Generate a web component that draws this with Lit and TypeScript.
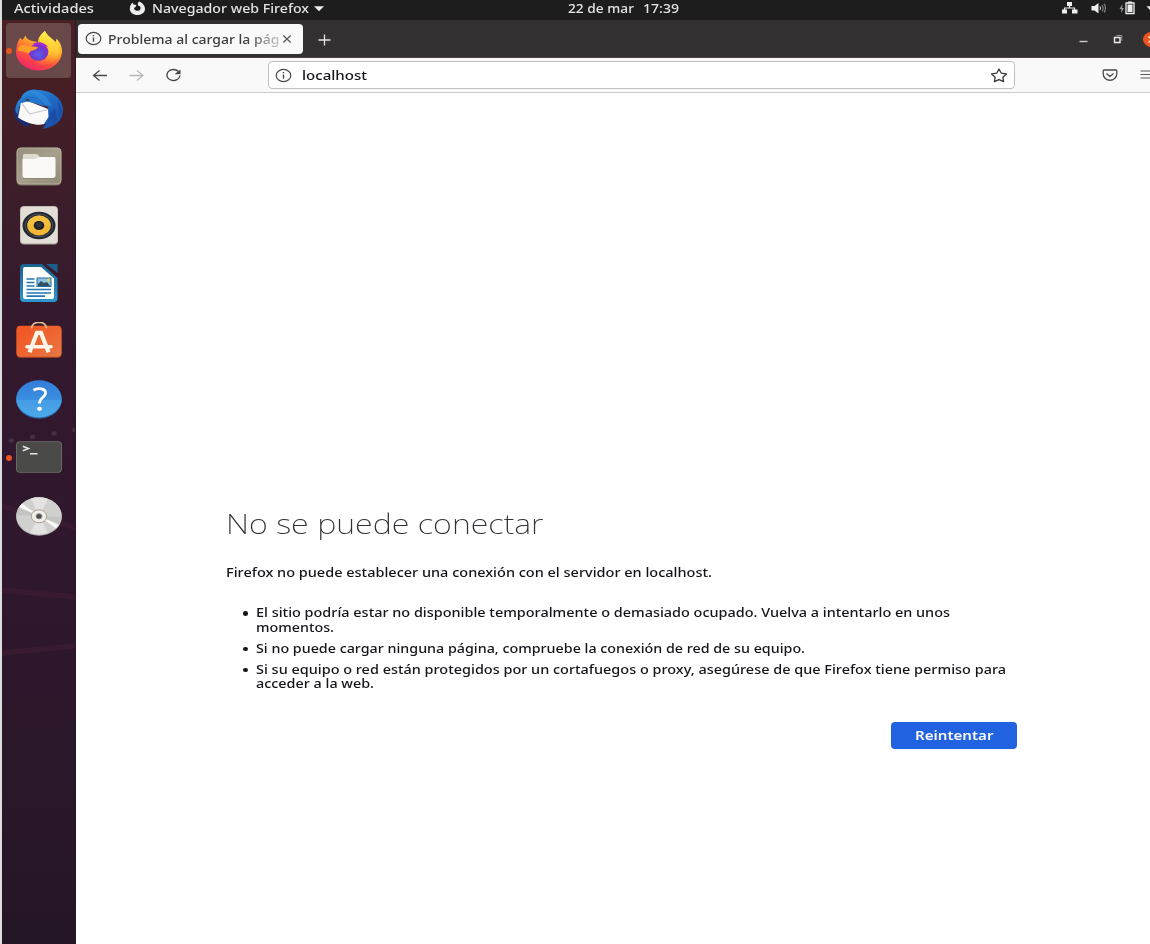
import { LitElement, html, svg, css } from "lit";
import { customElement, property } from "lit/decorators.js";

/** A single line of text stretched horizontally to a given width. */
@customElement("wide-text")
class WideText extends LitElement {
  @property({ type: Number }) w = 100;
  @property() text = "";
  static styles = css`
    :host { display: block; white-space: pre; flex: none; text-align: left; }
    .run { display: inline-block; transform-origin: 0 50%; vertical-align: top; }
  `;
  updated() {
    const run = this.renderRoot.querySelector(".run") as HTMLElement;
    this.style.width = `${this.w}px`;
    run.style.transform = "none";
    const natural = run.getBoundingClientRect().width;
    if (natural) run.style.transform = `scaleX(${this.w / natural})`;
  }
  render() {
    return html`<span class="run">${this.text}</span>`;
  }
}

const firefox = svg`
  <defs>
    <linearGradient id="fa" x1=".8" y1="0" x2=".25" y2="1"><stop offset="0" stop-color="#fff04a"/><stop offset=".35" stop-color="#ffb52a"/><stop offset=".62" stop-color="#ff5a36"/><stop offset="1" stop-color="#f0206c"/></linearGradient>
    <linearGradient id="fc" x1=".6" y1="0" x2=".5" y2="1"><stop offset="0" stop-color="#fff14b"/><stop offset=".6" stop-color="#ffc530"/><stop offset="1" stop-color="#ff8a2c" stop-opacity=".2"/></linearGradient>
    <radialGradient id="fb" cx=".5" cy=".65" r=".6"><stop offset="0" stop-color="#5b5fe8"/><stop offset=".6" stop-color="#6a3bd0"/><stop offset="1" stop-color="#9a25c8"/></radialGradient>
  </defs>
  <path fill="url(#fa)" d="M29 0C24 4 22 7 22 11L16 10C12 9 10 7 9.500 4.500L6.500 9 4 7C1 12 0 16 0 21C0 31 10 39.500 23 39.500C36 39.500 46 31 46 20C46 15 43 9 40 8L40 11 36 8C34 6 30 3 29 0Z"/>
  <path fill="url(#fc)" d="M29 0C24 4 23 7 24 11C31 13 35 19 31 25C29 29 24 31 19 30C26 36 38 34 42 26C44 21 43 16 39 11L36 8C34 6 30 3 29 0Z"/>
  <ellipse cx="22.500" cy="21" rx="9.800" ry="8.800" fill="url(#fb)"/>
  <path fill="#a22bcf" d="M17 13C20 10 29 11 32 16L26 14.500Z"/>
  <path fill="#ff9d29" d="M2 17C5 13 9 14 12 15L22 16C21 19 17 19 15 20L13 22C10 22 7 20 2 20Z"/>`;

const thunderbird = svg`
  <defs><linearGradient id="ta" x1=".1" y1="0" x2=".8" y2="1"><stop offset="0" stop-color="#2b90dc"/><stop offset=".5" stop-color="#1f69c4"/><stop offset="1" stop-color="#1b4ea8"/></linearGradient></defs>
  <path fill="#1d2a6b" d="M1 16C-2 24 1 31 7 35C10 37 14 38 17 37L9 28Z"/>
  <path fill="url(#ta)" d="M2 17C3 13 5 11 7 9C9 3 16-1 24 1C38 1 49 10 49 21C49 31 42 38 28 40L33 34 28 36 34 28L34 18 23 13 11 13 5 18 4 25C1 24 1 20 2 17Z"/>
  <path fill="#3d9be8" opacity=".4" d="M16 2C26 1 35 8 38 17L31 16C26 9 20 5 16 2Z"/>
  <path fill="#174596" opacity=".6" d="M41 19L43 30 38 35 39 29 34 34 36 24ZM44 10L48 22 45 27Z"/>
  <path fill="#fafafa" d="M7 13.500L14 12 34 20 34.500 28 30 35C24 37 14 35 4 28.500Z"/>
  <path fill="none" stroke="#c4c5c8" stroke-width="1.100" d="M8 14.500L15.500 25 34 20.500"/>
  <path fill="#2374cb" d="M5 13C10 7 15 6 20 8L32 18 20 14 13 12.500 8 14Z"/><ellipse cx="13.500" cy="11" rx="2" ry="1.300" fill="#374459"/>`;

const files = svg`
  <defs><linearGradient id="ga" x1="0" y1="0" x2="1" y2="1"><stop offset="0" stop-color="#96907e"/><stop offset=".5" stop-color="#a69f8c"/><stop offset="1" stop-color="#918a76"/></linearGradient></defs>
  <rect x=".5" y=".5" width="45" height="38" rx="4.500" fill="#756e5e"/><rect x="1" y="1" width="44" height="36" rx="4" fill="url(#ga)" stroke="#bdb7a5" stroke-width=".8"/>
  <path fill="#dedacf" d="M7 8Q7 7 9 7L20 7Q22 7 23 9L24 11 24 15 7 15Z"/>
  <path fill="#faf9f7" d="M7 12L18 12Q20 12 21 11Q22 10 24 10L38 10Q39.500 10 39.500 12L39.500 28Q39.500 31 37 31L9 31Q6.500 31 6.500 28L6.500 12Z"/>
  <path d="M7 31.500H39" stroke="#827b69" opacity=".5"/>`;

const music = svg`
  <rect x="4" y="0" width="38" height="38.500" rx="4" fill="#aaa49a"/><rect x="4.500" y=".5" width="37" height="37" rx="4" fill="#e2ded5"/>
  <ellipse cx="23" cy="19.500" rx="16.500" ry="13.800" fill="#22272f"/><ellipse cx="23" cy="19.500" rx="13.800" ry="11.400" fill="none" stroke="#596170" stroke-width=".8"/>
  <ellipse cx="23" cy="19.500" rx="11.800" ry="9.900" fill="#f3b735"/><path d="M11.500 19.500A11.500 9.900 0 0 1 34.500 19.500Z" fill="#f7c64b" opacity=".6"/>
  <ellipse cx="23" cy="19.500" rx="5.300" ry="4.500" fill="#1d2025"/><ellipse cx="23" cy="19" rx="3.200" ry="2.500" fill="#30343a"/>`;

const writer = svg`
  <defs><linearGradient id="wa" x1="0" y1="0" x2="0" y2="1"><stop offset="0" stop-color="#1a628e"/><stop offset="1" stop-color="#2d97cd"/></linearGradient></defs>
  <path fill="url(#wa)" d="M8 0H26L41.500 14V34Q41.500 38 38 38H8Q4 38 4 34V4Q4 0 8 0Z"/>
  <path fill="#1a5e8b" d="M30 0H41.500V9Z"/>
  <path fill="#fff" d="M9 3H25L38 14.500V33Q38 35 36 35H9Q7 35 7 33V5Q7 3 9 3Z"/>
  <path stroke="#1f77b4" stroke-width="1.700" d="M10.500 15H18.500M10.500 18.500H18.500M10.500 22H18.500M10.500 25.500H35M10.500 29H35M10.500 32.200H29"/>
  <rect x="21" y="14" width="14" height="8.500" fill="#8cc4e8" stroke="#246f9f"/><path fill="#354f60" d="M22 22V20L25 17 28 19 31 18 34 22Z"/><circle cx="32.500" cy="16" r="1.500" fill="#f6d04c"/>`;

const store = svg`
  <defs><linearGradient id="sa" x1="0" y1="0" x2="1" y2="1"><stop offset="0" stop-color="#f15422"/><stop offset=".5" stop-color="#ee6430"/><stop offset="1" stop-color="#e77744"/></linearGradient></defs>
  <g transform="translate(0 -1.700)"><rect x=".5" y="6" width="45" height="31.500" rx="4" fill="#b94720"/><rect x=".5" y="5.500" width="45" height="31" rx="4" fill="url(#sa)"/>
  <path fill="none" stroke="#e2bd91" stroke-width="1.800" d="M15.500 8C16 0 30 0 30.500 8"/>
  <path fill="none" stroke="#fff4ea" stroke-width="4.200" d="M13.500 32L21 12.500H25L32.500 32"/><path stroke="#fff4ea" stroke-width="3.600" stroke-linecap="round" d="M11 26.500H35"/></g>`;

const help = svg`
  <defs><linearGradient id="ha" x1="0" y1="0" x2="0" y2="1"><stop offset="0" stop-color="#347dda"/><stop offset=".52" stop-color="#3b8fe0"/><stop offset=".54" stop-color="#459de5"/><stop offset="1" stop-color="#4ba9e8"/></linearGradient></defs>
  <ellipse cx="23" cy="19.500" rx="23" ry="19.200" fill="#2766a7"/><ellipse cx="23" cy="19" rx="22.700" ry="18.500" fill="url(#ha)"/>
  <path fill="none" stroke="#fff" stroke-width="2.800" d="M17.500 10.200C22 7.500 30 8.500 29.500 13.500C29 17.500 23.500 17.500 23.500 23.500"/><ellipse cx="23.500" cy="28.800" rx="2.500" ry="2.100" fill="#fff"/>`;

const terminal = svg`
  <g transform="translate(0 -.8)"><rect x="0" y="4" width="46" height="31.500" rx="4" fill="#70706e"/><rect x=".8" y="4.800" width="44.400" height="29.900" rx="3.500" fill="#4a4a49"/>
  <path fill="none" stroke="#e7e7e7" stroke-width="1.500" d="M6.800 9L12.500 11.300 6.800 13.600M14 16.600H21.500"/></g>`;

const disc = svg`
  <ellipse cx="23" cy="19.500" rx="23" ry="19.200" fill="#aaa9a8"/><ellipse cx="23" cy="19" rx="22.600" ry="18.700" fill="#d0d0cf"/>
  <path fill="#e3e3e2" d="M23 19L15 1.500A22.600 18.700 0 0 1 32 2ZM23 19L14 36A22.600 18.700 0 0 0 32 36Z"/><path fill="#c3c3c2" d="M23 19L.5 18Q1 14 3 11ZM23 19L45.500 20Q45 24 43 27Z"/>
  <path fill="#f9f9f8" d="M23 19L3 10 6 6.500ZM23 19L40 31.500 43 28Z"/>
  <ellipse cx="23" cy="19.300" rx="7.700" ry="6.500" fill="#f0efeb" stroke="#aaa28d"/><ellipse cx="23" cy="19.300" rx="3" ry="2.600" fill="#4d4d4d" stroke="#908d86"/>`;

const apps = [
  { name: "firefox", art: firefox, h: 40, w: 46, active: true, running: true },
  { name: "thunderbird", art: thunderbird, h: 40, w: 49 },
  { name: "files", art: files, h: 39, w: 46 },
  { name: "music", art: music, h: 39, w: 46 },
  { name: "writer", art: writer, h: 39, w: 46 },
  { name: "store", art: store, h: 39, w: 46 },
  { name: "help", art: help, h: 39, w: 46 },
  { name: "terminal", art: terminal, h: 39, w: 46, running: true },
  { name: "disc", art: disc, h: 39, w: 46 },
];

@customElement("app-dock")
class AppDock extends LitElement {
  static styles = css`
    :host { display: block; position: relative; width: 73.550px; flex: none; box-sizing: border-box; border-right: 1px solid #2a1727; overflow: hidden;
      background: linear-gradient(#4b2023 0, #431e25 90px, #3c1d2a 180px, #351a2d 290px, #30172d 440px, #2e172d 620px, #291728 800px, #251625 924px); }
    .scene { position: absolute; left: 0; top: 0; }
    .list { position: relative; display: flex; flex-direction: column; padding-top: 1.500px; }
    .slot { display: flex; height: 58.200px; align-items: center; padding-left: 4px; }
    .tile { position: relative; width: 65px; height: 54.500px; border-radius: 4px; display: flex; align-items: center; justify-content: center; }
    .active { background: #694849; }
    .dot { position: absolute; left: 0; top: 24.300px; width: 6px; height: 6px; border-radius: 50%; background: #e95420; }
    svg { display: block; flex: none; }
  `;
  render() {
    return html`
      <svg class="scene" width="74" height="924">
        <g fill="#45303f"><ellipse cx="9.500" cy="420.500" rx="2.700" ry="2.200"/><ellipse cx="30.500" cy="417" rx="2.700" ry="2.200"/><ellipse cx="52" cy="413.500" rx="2.700" ry="2.200"/><ellipse cx="73" cy="410" rx="2.700" ry="2.200"/></g>
        <g stroke="#381b30" stroke-width="5.500"><path d="M0 486L74 508"/><path d="M0 570L74 577"/><path d="M0 633L74 626"/></g>
      </svg>
      <div class="list">
        ${apps.map((a) => html`<div class="slot"><div class="tile ${a.active ? "active" : ""}">
          ${a.running ? html`<span class="dot"></span>` : ""}
          <svg width=${a.w} height=${a.h} viewBox="0 0 ${a.w} ${a.h}">${a.art}</svg>
        </div></div>`)}
      </div>`;
  }
}

@customElement("system-bar")
class SystemBar extends LitElement {
  static styles = css`
    :host { display: flex; height: 20px; background: #1d1d1d; color: #e4e4e4; font: 500 12.200px/17px "Noto Sans", sans-serif; margin-left: 2px; overflow: hidden; }
    .left { display: flex; width: 566px; padding-left: 12px; box-sizing: border-box; }
    .logo { margin: 1px 6px 0 35px; }
    .caret { margin: 6px 0 0 5px; }
    .clock { display: flex; gap: 9px; flex: 1; }
    .tray { display: flex; width: 88px; }
    svg { display: block; flex: none; }
  `;
  render() {
    return html`
      <div class="left">
        <wide-text .w=${80} text="Actividades"></wide-text>
        <svg class="logo" width="17" height="15" viewBox="0 0 17 15"><path fill="#eee" d="M10 .5C13 1.500 16 4 16 8C16 11.500 12.500 14 8.500 14C4 14 .8 11.500 .8 7.500C.8 5 2 3 3.500 1.500L4.500 3.500 7.500 4 6.500 6 5 7C5 9 7 10 9 9.800C12 9.500 12.300 6.500 10.500 5L9 4.500C8.700 3 9 1.500 10 .5Z"/></svg>
        <wide-text .w=${157} text="Navegador web Firefox"></wide-text>
        <svg class="caret" width="10" height="6"><path fill="#eee" d="M0 .3H10L5 5.200Z"/></svg>
      </div>
      <div class="clock"><wide-text .w=${66} text="22 de mar"></wide-text><wide-text .w=${36} text="17:39"></wide-text></div>
      <div class="tray">
        <svg width="88" height="20" viewBox="0 0 88 20">
          <path fill="#eee" d="M5 2H10V6H5ZM0 9.500H5V13.500H0ZM10 9.500H15.500V13.500H10Z"/><path fill="none" stroke="#eee" stroke-width="1.200" d="M7.500 6V8H2.500V10M7.500 8H12.500V10"/>
          <path fill="#eee" d="M29.500 6H32.500L36.500 3V13.500L32.500 10.500H29.500Z"/><path fill="none" stroke="#ddd" stroke-width="1.100" d="M38 6.500Q39.200 8.300 38 10"/><path fill="none" stroke="#888" stroke-width="1.100" d="M40 5Q42.300 8.300 40 11.500M42 3.800Q45 8.300 42 12.500"/>
          <path fill="#999" d="M60.500 4L57.500 9H59.500L59 13 62 8H60Z"/><path fill="none" stroke="#eee" stroke-width="1.300" d="M64 3H72V13.500H64Z"/><path fill="#eee" d="M66 1.500H70V3H66ZM65.500 4.500H70.500V12H65.500Z"/>
          <path fill="#eee" d="M84.500 6.300H94L89 11Z"/>
        </svg>
      </div>`;
  }
}

const info = html`<svg width="17" height="15" viewBox="0 0 17 15"><ellipse cx="8.500" cy="7.500" rx="7.300" ry="6.100" fill="none" stroke="#484848" stroke-width="1.200"/><path stroke="#484848" stroke-width="1.400" d="M8.500 6.500V10.800M8.500 4V5.300"/></svg>`;

@customElement("browser-chrome")
class BrowserChrome extends LitElement {
  static styles = css`
    :host { display: block; font: 500 12.600px/18px "Noto Sans", sans-serif; color: #15141a; }
    svg { display: block; flex: none; }
    .tabs { display: flex; box-sizing: border-box; height: 38px; background: #333031; border-bottom: 1px solid #4c4546; padding: 3.500px 0 0 2px; overflow: hidden; }
    .tab { display: flex; align-items: center; box-sizing: border-box; width: 225px; height: 30.500px; background: #f9f9f9; border-radius: 4px; padding-left: 7px; color: #3d3d40; flex: none; }
    .label { width: 171px; margin-left: 6px; padding-top: 2px; overflow: hidden; -webkit-mask-image: linear-gradient(90deg, #000 138px, transparent 182px); mask-image: linear-gradient(90deg, #000 138px, transparent 182px); }
    .close { margin-left: 3px; }
    .plus { margin: 10px 0 0 15.500px; }
    .controls { margin-left: auto; margin-top: 5px; }
    .tools { display: flex; box-sizing: border-box; height: 35px; background: #f9f9fa; border-bottom: 1px solid #cccccf; padding-top: 3px; overflow: hidden; }
    .nav { width: 192px; }
    .url { display: flex; align-items: center; box-sizing: border-box; width: 747px; height: 28px; border: 1px solid #bfbfc4; border-radius: 4px; background: #fff; padding: 0 6px 0 6.500px; flex: none; }
    .host { margin-left: 10px; padding-top: 1.500px; flex: 1; }
  `;
  render() {
    return html`
      <div class="tabs">
        <div class="tab">${info}<div class="label"><wide-text .w=${192} text="Problema al cargar la página"></wide-text></div>
          <svg class="close" width="10" height="10"><path stroke="#555" stroke-width="1.200" d="M1.300 1.500L8.700 8.500M8.700 1.500L1.300 8.500"/></svg>
        </div>
        <svg class="plus" width="13" height="12"><path stroke="#e6e6e6" stroke-width="1.300" d="M6.500 .5V11.500M.5 6H12.500"/></svg>
        <svg class="controls" width="75" height="22" viewBox="0 0 75 22">
          <path stroke="#ccc" stroke-width="1.400" d="M4.500 12.500H12.500"/><path fill="none" stroke="#eee" stroke-width="1.400" d="M39.500 8.500H45V13.500H39.500Z"/><path fill="none" stroke="#999" d="M41.500 6.500H46.800V11.800"/>
          <ellipse cx="76.500" cy="10.500" rx="8.500" ry="7.500" fill="#e95420"/><path stroke="#fff" stroke-width="1.200" d="M73.500 7.500L79 13M79 8L73.500 13.500"/>
        </svg>
      </div>
      <div class="tools">
        <svg class="nav" width="192" height="30" viewBox="0 0 192 30">
          <path fill="none" stroke="#4a4a4d" stroke-width="1.300" d="M31 14.500H17.500M23.500 9.500L17.500 14.500 23.500 19.500"/>
          <path fill="none" stroke="#b9b9bc" stroke-width="1.300" d="M53.500 14.500H67M61 9.500L67 14.500 61 19.500"/>
          <path fill="none" stroke="#444447" stroke-width="1.300" d="M102.500 10.500A6.600 5.500 0 1 0 104 14.500"/><path fill="#444447" d="M104.500 8.500V13.300H98.500Z"/>
        </svg>
        <div class="url">${info}<wide-text class="host" .w=${65} text="localhost"></wide-text>
          <svg width="18" height="15" viewBox="0 0 18 15"><path fill="none" stroke="#39393c" stroke-width="1.300" stroke-linejoin="round" d="M9 1L11.300 5.200 16.500 5.900 12.800 9.200 13.600 13.700 9 11.600 4.400 13.700 5.200 9.200 1.500 5.900 6.700 5.200Z"/></svg>
        </div>
        <svg width="135" height="30" viewBox="0 0 135 30">
          <path fill="none" stroke="#48484b" stroke-width="1.300" d="M89 9H101Q101.800 9 101.800 10V12.500C101.800 21.500 88.200 21.500 88.200 12.500V10Q88.200 9 89 9ZM91.500 12.500L95 15.500 98.500 12.500"/>
          <path stroke="#555" stroke-width="1.200" d="M125.500 10H137M125.500 13.500H137M125.500 17H137"/>
        </svg>
      </div>`;
  }
}

@customElement("error-page")
class ErrorPage extends LitElement {
  static styles = css`
    :host { display: block; box-sizing: border-box; padding: 412.500px 0 0 150.300px; color: #15141a; font: 500 12.600px/14.500px "Noto Sans", sans-serif; }
    .title { margin: 0; font-weight: 200; font-size: 27px; line-height: 36px; color: #303036; }
    .lead { margin: 24.300px 0 0; }
    .causes { margin: 26.100px 0 0; padding: 0; list-style: none; }
    .cause { display: flex; margin-bottom: 6.500px; padding-left: 17px; gap: 8.200px; }
    .bullet { width: 5px; height: 4.500px; margin-top: 5px; border-radius: 50%; background: #15141a; }
    .actions { display: flex; justify-content: flex-end; width: 791px; padding-top: 23.200px; }
    .retry { display: flex; align-items: center; justify-content: center; width: 126px; height: 27.500px; padding: 1.500px 0 0 1px; border: 0; border-radius: 4px; background: #2162e0; color: #fbfbfe; font: 600 12.300px/18px "Noto Sans", sans-serif; }
  `;
  causes = [
    [
      ["El sitio podría estar no disponible temporalmente o demasiado ocupado. Vuelva a intentarlo en unos", 694],
      ["momentos.", 78],
    ],
    [["Si no puede cargar ninguna página, compruebe la conexión de red de su equipo.", 549]],
    [
      ["Si su equipo o red están protegidos por un cortafuegos o proxy, asegúrese de que Firefox tiene permiso para", 750],
      ["acceder a la web.", 118],
    ],
  ] as [string, number][][];
  render() {
    return html`
      <h1 class="title"><wide-text .w=${317.5} text="No se puede conectar"></wide-text></h1>
      <p class="lead"><wide-text .w=${486} text="Firefox no puede establecer una conexión con el servidor en localhost."></wide-text></p>
      <ul class="causes">
        ${this.causes.map((lines) => html`<li class="cause"><span class="bullet"></span><div>
          ${lines.map(([t, w]) => html`<wide-text .w=${w} .text=${t}></wide-text>`)}
        </div></li>`)}
      </ul>
      <div class="actions"><button class="retry"><wide-text .w=${78.5} text="Reintentar"></wide-text></button></div>`;
  }
}

@customElement("app-root")
class AppRoot extends LitElement {
  static styles = css`
    :host { display: block; width: 1150px; height: 944px; overflow: hidden; background: #dcdedd; }
    .desktop { display: flex; height: 924px; padding-left: 2px; }
    .window { flex: 1; min-width: 0; background: #fff; }
  `;
  render() {
    return html`
      <system-bar></system-bar>
      <div class="desktop">
        <app-dock></app-dock>
        <div class="window"><browser-chrome></browser-chrome><error-page></error-page></div>
      </div>`;
  }
}
